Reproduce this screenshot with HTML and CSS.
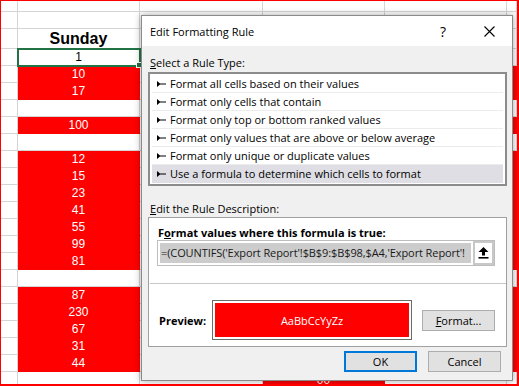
FILE: index.html
```html
<!DOCTYPE html>
<html lang="en">
<head>
  <meta charset="UTF-8" />
  <title>Edit Formatting Rule</title>
  <link rel="stylesheet" href="styles.css">
</head>
<body>
  <div class="frame">
    <!-- Worksheet behind the dialog -->
    <div id="sheet" class="sheet"></div>

    <!-- Dialog -->
    <div class="dialog">
      <div class="dlg-title">
        <span class="dlg-name">Edit Formatting Rule</span>
        <span class="title-btn">?</span>
        <span class="title-btn">
          <svg width="11" height="11" viewBox="0 0 11 11"><path d="M0.5 0.5 L10.5 10.5 M10.5 0.5 L0.5 10.5" stroke="#000" stroke-width="1.1" fill="none"/></svg>
        </span>
      </div>

      <div class="dlg-body">
        <div class="label"><u>S</u>elect a Rule Type:</div>
        <ul class="rule-list">
          <li><svg class="bullet" width="9" height="6" viewBox="0 0 9 6"><path d="M0 0 L3 2.5 L9 2.5 L9 3.5 L3 3.5 L0 6 Z" fill="#000"/></svg>Format all cells based on their values</li>
          <li><svg class="bullet" width="9" height="6" viewBox="0 0 9 6"><path d="M0 0 L3 2.5 L9 2.5 L9 3.5 L3 3.5 L0 6 Z" fill="#000"/></svg>Format only cells that contain</li>
          <li><svg class="bullet" width="9" height="6" viewBox="0 0 9 6"><path d="M0 0 L3 2.5 L9 2.5 L9 3.5 L3 3.5 L0 6 Z" fill="#000"/></svg>Format only top or bottom ranked values</li>
          <li><svg class="bullet" width="9" height="6" viewBox="0 0 9 6"><path d="M0 0 L3 2.5 L9 2.5 L9 3.5 L3 3.5 L0 6 Z" fill="#000"/></svg>Format only values that are above or below average</li>
          <li><svg class="bullet" width="9" height="6" viewBox="0 0 9 6"><path d="M0 0 L3 2.5 L9 2.5 L9 3.5 L3 3.5 L0 6 Z" fill="#000"/></svg>Format only unique or duplicate values</li>
          <li class="active"><svg class="bullet" width="9" height="6" viewBox="0 0 9 6"><path d="M0 0 L3 2.5 L9 2.5 L9 3.5 L3 3.5 L0 6 Z" fill="#000"/></svg>Use a formula to determine which cells to format</li>
        </ul>

        <div class="label desc-label"><u>E</u>dit the Rule Description:</div>
        <div class="desc-panel">
          <div class="formula-label">F<u>o</u>rmat values where this formula is true:</div>
          <div class="formula-row">
            <div class="formula-input"><span class="formula-text">=(COUNTIFS('Export Report'!$B$9:$B$98,$A4,'Export Report'!</span></div>
            <div class="ref-btn">
              <svg width="11" height="12" viewBox="0 0 11 12"><path d="M5.5 0 L10.5 5 L7 5 L7 8.5 L4 8.5 L4 5 L0.5 5 Z" fill="#000"/><rect x="0.5" y="10" width="10" height="1.6" fill="#000"/></svg>
            </div>
          </div>
          <div class="divider"></div>
          <div class="preview-row">
            <span class="preview-label">Preview:</span>
            <div class="preview-box"><div class="preview-fill">AaBbCcYyZz</div></div>
            <div class="btn"><u>F</u>ormat...</div>
          </div>
        </div>

        <div class="actions">
          <div class="btn ok">OK</div>
          <div class="btn">Cancel</div>
        </div>
      </div>
    </div>
  </div>

  <script>
    const sheet = document.getElementById('sheet');

    // column B values, one per worksheet row from the top edge
    const sunday = ['', '', 'Sunday', '1', '10', '17', '', '100', '', '12', '15', '23', '41',
      '55', '99', '81', '', '87', '230', '67', '31', '44', ''];

    sunday.forEach((value, row) => {
      for (let col = 0; col < 6; col++) {
        const cell = document.createElement('div');
        cell.className = 'cell';

        if (col === 1) {
          cell.textContent = value;
          if (row === 2) cell.classList.add('head');
          if (row === 3) {
            cell.classList.add('sel');
            const handle = document.createElement('span');
            handle.className = 'fillHandle';
            cell.appendChild(handle);
          }
          if (row > 3 && value) cell.classList.add('red');
        }

        // other highlighted columns peeking out around the dialog
        if (col === 5 && row > 3 && value) cell.classList.add('red');
        if (col === 3 && row === 22) {
          cell.classList.add('red');
          cell.textContent = '00';
        }

        sheet.appendChild(cell);
      }
    });
  </script>
</body>
</html>
```

FILE: styles.css
```css
body {
  margin: 0;
  background-color: #fff;
}

.frame {
  position: relative;
  width: 519px;
  height: 386px;
  box-sizing: border-box;
  border: solid #f00;
  border-width: 1px 2px 2px 1px;
  overflow: hidden;
  background-color: #fff;
}

/* Worksheet */
.sheet {
  display: grid;
  grid-template-columns: 17px 122px 123px 122px 122px 1fr;
  grid-template-rows: 11px 17px 20px;
  grid-auto-rows: 17px;
}

.cell {
  position: relative;
  box-sizing: border-box;
  border-right: 1px solid #d4d4d4;
  border-bottom: 1px solid #d4d4d4;
  font-family: "Liberation Sans", Arial, sans-serif;
  font-size: 12px;
  line-height: 16px;
  text-align: center;
  color: #000;
}

.cell.head {
  font-size: 16px;
  font-weight: bold;
  line-height: 20px;
}

.cell.red {
  background-color: #f00;
  border-color: #f00;
  color: #fff;
}

.cell.sel {
  outline: 2px solid #217346;
  outline-offset: -1px;
  z-index: 1;
}

.fillHandle {
  position: absolute;
  right: -3px;
  bottom: -3px;
  width: 4px;
  height: 4px;
  background-color: #217346;
  border: 1px solid #fff;
}

/* Dialog */
.dialog {
  position: absolute;
  left: 140px;
  top: 14px;
  width: 372px;
  height: 366px;
  box-sizing: border-box;
  border: 1px solid #8a8a8a;
  background-color: #f0f0f0;
  box-shadow: 0 0 7px rgba(0, 0, 0, 0.35);
  font-family: "Open Sans", "Noto Sans", sans-serif;
  font-size: 11px;
  color: #000;
  z-index: 2;
}

.dlg-title {
  display: flex;
  align-items: center;
  height: 30px;
  padding-left: 8px;
  background-color: #fff;
}

.dlg-name {
  flex: 1;
  font-size: 11px;
}

.title-btn {
  display: flex;
  align-items: center;
  justify-content: center;
  width: 46px;
  height: 30px;
  font-size: 14px;
}

.dlg-body {
  padding: 9px 5px 0 6px;
}

.label {
  padding-left: 2px;
  line-height: 16px;
  margin-bottom: 1px;
}

.desc-label {
  margin-top: 15px;
  margin-bottom: 0;
}

.rule-list {
  list-style: none;
  margin: 0;
  padding: 1px 2px;
  border: 2px solid #8c8c8c;
  background-color: #fff;
}

.rule-list li {
  display: flex;
  align-items: center;
  height: 18px;
  box-sizing: border-box;
  padding-left: 5px;
  border-bottom: 1px solid #ececec;
  white-space: nowrap;
}

.rule-list li.active {
  background-color: #dedee4;
  border-bottom-color: #dedee4;
}

.bullet {
  margin-right: 4px;
  flex-shrink: 0;
}

.desc-panel {
  height: 130px;
  box-sizing: border-box;
  border: 1px solid #a0a0a0;
  background-color: #fff;
}

.formula-label {
  margin-top: 8px;
  padding-left: 9px;
  line-height: 14px;
  font-weight: bold;
}

.formula-row {
  display: flex;
  height: 26px;
  margin-left: 8px;
  width: 338px;
  box-sizing: border-box;
  border: 1px solid #bdbdbd;
}

.formula-input {
  flex: 1;
  padding: 2px;
  white-space: nowrap;
  background-color: #fff;
}

.formula-text {
  display: block;
  height: 20px;
  line-height: 20px;
  padding-left: 1px;
  background-color: #cccccc;
  color: #1a1a1a;
  letter-spacing: -0.1px;
}

.ref-btn {
  display: flex;
  align-items: center;
  justify-content: center;
  width: 21px;
  box-sizing: border-box;
  border: 2px solid #c8c8c8;
  background-color: #fff;
}

.divider {
  margin-top: 17px;
  margin-left: 1px;
  height: 1px;
  background-color: #c8c8c8;
}

.preview-row {
  display: flex;
  align-items: center;
  margin-top: 16px;
  padding-left: 10px;
  height: 40px;
}

.preview-label {
  width: 53px;
  font-weight: bold;
}

.preview-box {
  width: 200px;
  height: 40px;
  box-sizing: border-box;
  border: 1px solid #6d6d6d;
  padding: 2px;
  margin-right: 10px;
}

.preview-fill {
  height: 100%;
  display: flex;
  align-items: center;
  justify-content: center;
  background-color: #f00;
  color: #fff;
}

.btn {
  display: flex;
  align-items: center;
  justify-content: center;
  width: 73px;
  height: 21px;
  box-sizing: border-box;
  border: 1px solid #adadad;
  background-color: #e1e1e1;
}

.btn.ok {
  border: 2px solid #0078d7;
}

.actions {
  display: flex;
  justify-content: flex-end;
  gap: 11px;
  margin-top: 4px;
  margin-right: 6px;
}
```
